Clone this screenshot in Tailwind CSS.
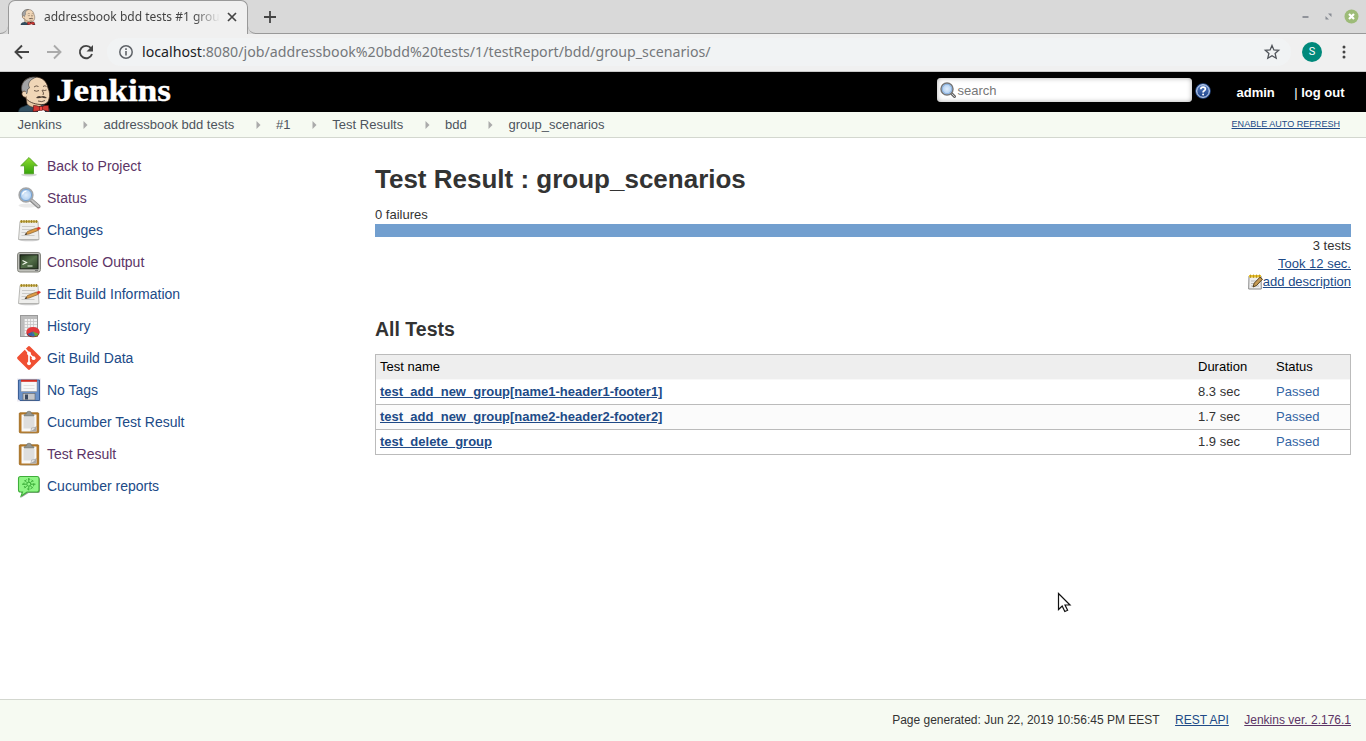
<!DOCTYPE html>
<html lang="en">
<head>
<meta charset="utf-8">
<title>Test Result : group_scenarios</title>
<script src="https://cdn.jsdelivr.net/npm/@tailwindcss/browser@4"></script>
</head>
<body class="relative flex h-[741px] w-[1366px] flex-col overflow-hidden bg-white font-['Liberation_Sans',sans-serif] text-[13px] text-[#333]">
<svg class="absolute size-0">
  <defs>
    <linearGradient id="gr" x2="0" y2="1"><stop stop-color="#8fdd30"/><stop offset="1" stop-color="#36a40c"/></linearGradient>
    <linearGradient id="scr" x2="1" y2="1"><stop stop-color="#24351e"/><stop offset=".5" stop-color="#54704a"/><stop offset="1" stop-color="#2a3d24"/></linearGradient>
    <linearGradient id="help" x2="0" y2="1"><stop stop-color="#5f86c8"/><stop offset="1" stop-color="#173c83"/></linearGradient>
    <radialGradient id="lens"><stop stop-color="#e0edfb"/><stop offset="1" stop-color="#a4c8ef"/></radialGradient>
  </defs>
  <symbol id="butler" viewBox="0 0 33 36">
    <path d="M.5 36c0-3 2-5 5-5.500l6-2.500h12l6 3c2 1 2.500 3 2.500 5z" fill="#335061" stroke="#16242e" stroke-width=".7"/>
    <path d="M8 21l1 7q5 5 13 3l2-3z" fill="#e6c9a6" stroke="#4a3628" stroke-width=".6"/>
    <path d="M7 21C4 17 3 13 4 9 6 3 11 1 17 1c8 0 12 5 13 11 2 4 2 8 1 11-1 4-4 6-9 5.500C16 28 10 26 7 21z" fill="#f0d6b7" stroke="#3a2a20" stroke-width=".8"/>
    <path d="M5.500 18C2.500 14 3 8 7 4.500 10 2 14 .8 18 1.200 13.500 3 11 5 10.500 9l1 3-2 1.500-.5 4z" fill="#a2a3a5" stroke="#333" stroke-width=".6"/>
    <path d="M7.500 15.500c-2.500-1-4 1-3.500 3s2.500 3.500 5 2.500" fill="#f0d6b7" stroke="#4a3020" stroke-width=".8"/>
    <path d="M16 11q2-2 4.500-.5M25 10.500q2-1.500 3.500 0M16 14.500q2.500 1.500 5 0M24.500 14q2 1 4 0M24 14q2.500 3.500 1 5M20 25q4 1.500 7-.5" fill="none" stroke="#4a382c" stroke-width=".8"/>
    <path d="M18 22q2-3 5-1.500 3-1.500 6 1.500-3 .5-5-.5-3 1-6 .5z" fill="#4a3d34"/>
    <path d="M20 31h6l1 5h-7z" fill="#fff"/>
    <path d="M15.500 29.500q3-.5 7 2 4.500-3 8-2l.5 6q-4-.5-7.500-2.500-4 3-8.500 2.500z" fill="#d33833" stroke="#4a0d0d" stroke-width=".6"/>
    <rect x="21.500" y="30.500" width="3" height="4" fill="#ef4a44" stroke="#4a0d0d" stroke-width=".5"/>
  </symbol>
  <symbol id="up" viewBox="0 0 24 24">
    <ellipse cx="12" cy="20.800" rx="8" ry="1.600" fill="#d8d8d8"/>
    <path d="M12 3.500l8.300 8.300h-3.800v8H7.500v-8H3.700z" fill="url(#gr)" stroke="#4a9a1c" stroke-width=".8"/>
  </symbol>
  <symbol id="lensicon" viewBox="0 0 24 24">
    <ellipse cx="11" cy="19.500" rx="9.500" ry="2" fill="#eaeaea"/>
    <path d="M14 14l7.500 6.500" stroke="#8b8b8b" stroke-width="4" stroke-linecap="round"/>
    <path d="M14.500 14l7 6.200" stroke="#c4c4c4" stroke-width="2" stroke-linecap="round"/>
    <circle cx="9" cy="9" r="6.800" fill="url(#lens)" stroke="#a4a6a8" stroke-width="1.700"/>
    <circle cx="9" cy="9" r="5.600" fill="none" stroke="#729fcf" stroke-width=".9"/>
    <path d="M5.500 8.500q.5-3 4-3.500" stroke="#fff" stroke-width="1.200" fill="none"/>
  </symbol>
  <symbol id="notepad" viewBox="0 0 24 24">
    <ellipse cx="12" cy="22" rx="10" ry="1.300" fill="#ccc"/>
    <path d="M3 3.500h18l1 18H1.500z" fill="#eeeeec" stroke="#a8a8a4" stroke-width=".8"/>
    <path d="M3 2.500h17.500v2H3z" fill="#c2a63a"/>
    <path d="M4.500 2v3M7 2v3M9.500 2v3M12 2v3M14.500 2v3M17 2v3M19.500 2v3" stroke="#8f7620" stroke-width=".8"/>
    <path d="M5 8.500h13M5 11.500h11M4.500 14.500h7M4.500 17.500h13" stroke="#cbcbc8"/>
    <path d="M8.500 16.500l2-3 9-3.500 1.500 2.500-9 3.500z" fill="#dc9b45" stroke="#86602c" stroke-width=".7"/>
    <path d="M19.500 10l2-.9q2-.2 2.300 1.500L21 12.500z" fill="#dd3a2c"/>
    <path d="M7.500 17l1.600-2 1 1.200z" fill="#222"/>
  </symbol>
  <symbol id="console" viewBox="0 0 24 24">
    <rect x=".5" y="2.500" width="23" height="19.500" rx="2.500" fill="#bfc0ba" stroke="#85867f"/>
    <rect x="3" y="4.800" width="18" height="14" fill="url(#scr)" stroke="#171d14"/>
    <path d="M5.500 10.500l4 2-4 2M10.500 16h5" fill="none" stroke="#eef5e8" stroke-width="1.200"/>
    <path d="M18 20.500h3" stroke="#777"/>
  </symbol>
  <symbol id="history" viewBox="0 0 24 24">
    <rect x="3.500" y="1.500" width="17" height="21" fill="#f2f2f2" stroke="#999"/>
    <path d="M4 2h16v3H4zM4 2h3v20H4z" fill="#bcbcbc"/>
    <path d="M7.500 5v17M10.500 5v17M13.500 5v17M16.500 5v17M7 7.500h13M7 10.500h13M7 13.500h13M7 16.500h13M7 19.500h13" stroke="#c5c5c5" stroke-width=".8"/>
    <ellipse cx="16" cy="18.800" rx="6.500" ry="4.500" fill="#a50e0e"/>
    <ellipse cx="16" cy="17.500" rx="6.500" ry="4.500" fill="#e4393b"/>
    <path d="M16 17.500l-1.500 5q-2.500-.3-4-2.500z" fill="#3465a4"/><path d="M16 17.500l6 2.500q-2 3-7.500 2.500z" fill="#6aa535"/><path d="M16 17.500l-1.500 5 3.500-.3z" fill="#3a63b8"/>
  </symbol>
  <symbol id="git" viewBox="0 0 24 24">
    <path d="M10.800.7q1.200-1.200 2.400 0l10.100 10.100q1.200 1.200 0 2.400L13.200 23.300q-1.200 1.200-2.400 0L.7 13.200q-1.200-1.200 0-2.400z" fill="#f05033"/>
    <path d="M8 2.800l4 4.500v10M12 7.500l4.500 4.500" stroke="#fff" stroke-width="1.700" fill="none"/>
    <circle cx="12" cy="7.500" r="1.900" fill="#fff"/><circle cx="12" cy="17.300" r="1.900" fill="#fff"/><circle cx="16.600" cy="12.200" r="1.900" fill="#fff"/>
  </symbol>
  <symbol id="floppy" viewBox="0 0 24 24">
    <rect y=".5" width="24" height="23" fill="#eceaf2"/>
    <path d="M1.500 2h21v20.500H3L1.500 21z" fill="#6a91c8" stroke="#3a5f96"/>
    <rect x="4" y="2" width="16" height="11.500" fill="#f7f7f7" stroke="#888" stroke-width=".5"/>
    <path d="M4 1.800h16v2H4z" fill="#d22a20"/>
    <path d="M6.500 7.500h11M6.500 10.500h11" stroke="#e0e0e0"/>
    <rect x="6" y="15.500" width="12" height="6.500" fill="#c4c6ca" stroke="#666" stroke-width=".6"/>
    <rect x="8" y="16.500" width="3" height="5" fill="#394860"/>
  </symbol>
  <symbol id="clip" viewBox="0 0 24 24">
    <ellipse cx="12" cy="23.300" rx="9" ry=".7" fill="#ddd"/>
    <rect x="2.300" y="2.800" width="19.400" height="20" rx=".8" fill="#b87a28" stroke="#9b6417" stroke-width=".8"/>
    <path d="M4.500 4.500h15v17h-15z" fill="#f8f8f8"/>
    <path d="M6.500 7h11v11.500h-11z" fill="#dedede"/>
    <path d="M13.500 21.500q1.500-1 1-3.500 2 .5 5-1.500v5z" fill="#a9a9a9"/>
    <path d="M14.500 18q-.2 2-1 3.500 3.500-1 6-5-2.500 1.800-5 1.500z" fill="#e9e9e9" stroke="#888" stroke-width=".4"/>
    <path d="M7 6q0-2 2.500-2.300Q9.500 1.200 12 1.200t2.500 2.500Q17 4 17 6z" fill="#949691" stroke="#73756f" stroke-width=".7"/>
  </symbol>
  <symbol id="cuke" viewBox="0 0 24 24">
    <path d="M3.500 4h18.500q1 0 1 2v11q0 2-2 2H11.500l-7.500 4.700 2-4.700H4z" fill="#555" opacity=".6"/>
    <path d="M3.500 2.500h16.500q2 0 2 2v11.500q0 2-2 2H10L4 22.300l1.500-4.300h-2q-2 0-2-2V4.500q0-2 2-2z" fill="#8ff585" stroke="#3fae3a" stroke-width="1.100"/>
    <g fill="none" stroke="#3aab38" stroke-width="1"><circle cx="11.800" cy="10.200" r="2"/><circle cx="11.800" cy="10.200" r="5" stroke-dasharray="2.200 1.500"/><path d="M11.800 4v4M11.800 12.500v4M5 10.200h4.500M14 10.200h4.500M7.500 6.200l2.500 2.500M13.300 11.700l2.500 2.500M16 6.200l-2.500 2.500M10 11.700l-2.500 2.500"/></g>
  </symbol>
  <symbol id="crumb" viewBox="0 0 5 8"><path d="M.5 0L4.500 4 .5 8z" fill="#aaa"/></symbol>
</svg>

<!-- Window title bar with tab -->
<div class="flex h-[34px] shrink-0 bg-[#d9d9d9]">
  <div class="w-2 rounded-br-lg border-b border-[#999]"></div>
  <div class="flex h-[34px] w-[240px] items-center rounded-t-[7px] border border-b-0 border-[#999] bg-[#f0f0f0] pb-px pl-[11px]">
    <svg class="size-4 shrink-0"><use href="#butler"/></svg>
    <div class="ml-2 w-[176px] whitespace-nowrap mask-r-from-85% font-['Noto_Sans',sans-serif] text-xs text-[#444]">addressbook bdd tests #1 grou</div>
    <svg class="ml-[7px] size-[10px] shrink-0" viewBox="0 0 10 10"><path d="M1 1l8 8M9 1L1 9" stroke="#444" stroke-width="1.700"/></svg>
  </div>
  <div class="flex flex-1 items-center rounded-bl-lg border-b border-[#999] pr-[7px]">
    <svg class="ml-4 size-3" viewBox="0 0 12 12"><path d="M6 0v12M0 6h12" stroke="#444" stroke-width="1.800"/></svg>
    <svg class="ml-auto h-[6px] w-[7px]" viewBox="0 0 7 6"><path d="M.5 3h6" stroke="#888c94" stroke-width="1.800"/></svg>
    <svg class="ml-4 size-[7px]" viewBox="0 0 7 7"><path d="M3 .5h3.500v3.500zM.5 3v3.500H4z" fill="#888c94"/></svg>
    <svg class="ml-3 size-[15px]" viewBox="0 0 15 15"><circle cx="7.500" cy="7.500" r="7" fill="#9dbb78"/><path d="M5 5l5 5M10 5l-5 5" stroke="#fff" stroke-width="2.200"/></svg>
  </div>
</div>

<!-- Browser toolbar -->
<div class="flex h-[38px] shrink-0 items-center border-b border-[#c8c8c8] bg-[#f0f0f0] pb-[2px] pl-[14px]">
  <svg class="size-4" viewBox="0 0 16 16"><path d="M15 8H2M8 1.500L1.500 8 8 14.500" fill="none" stroke="#444" stroke-width="1.900"/></svg>
  <svg class="ml-4 size-4" viewBox="0 0 16 16"><path d="M1 8h13M8 1.500L14.500 8 8 14.500" fill="none" stroke="#aaa" stroke-width="1.900"/></svg>
  <svg class="ml-4 size-4" viewBox="0 0 16 16"><path d="M13 4.200A6.200 6.200 0 1 0 14 10" fill="none" stroke="#444" stroke-width="1.900"/><path d="M15 1v6.500H8.500z" fill="#444"/></svg>
  <div class="ml-[13px] flex h-7 w-[1184px] items-center rounded-full bg-[#f1f3f4] pr-3 pl-3">
    <svg class="size-[14px]" viewBox="0 0 14 14"><circle cx="7" cy="7" r="6.200" fill="none" stroke="#5f6368" stroke-width="1.500"/><path d="M7 6v4.500M7 3.300v1.600" stroke="#5f6368" stroke-width="1.600"/></svg>
    <div class="ml-[9px] whitespace-nowrap font-['Noto_Sans',sans-serif] text-[14.2px] leading-5 text-[#75787b]"><span class="text-[#202124]">localhost</span>:8080/job/addressbook%20bdd%20tests/1/testReport/bdd/group_scenarios/</div>
    <svg class="ml-auto size-[14px] overflow-visible" viewBox="0 0 14 14"><path d="M7 .5l1.900 4.400 4.800.4-3.600 3.200 1.100 4.700L7 10.700l-4.200 2.500 1.100-4.700L.3 5.300l4.800-.4z" fill="none" stroke="#50545a" stroke-width="1.300"/></svg>
  </div>
  <div class="ml-[11px] flex size-5 items-center justify-center rounded-full bg-[#00897b] pt-px font-[Roboto,sans-serif] text-[11px] text-white">S</div>
  <svg class="ml-5 h-[14px] w-1" viewBox="0 0 4 14"><g fill="#444"><circle cx="2" cy="2" r="1.500"/><circle cx="2" cy="7" r="1.500"/><circle cx="2" cy="12" r="1.500"/></g></svg>
</div>

<!-- Jenkins header -->
<header class="flex h-10 shrink-0 items-center bg-black text-white">
  <svg class="ml-[18px] h-10 w-[160px]" viewBox="0 0 160 40">
    <svg x="0" y="4" width="33" height="36"><use href="#butler"/></svg>
    <text x="38" y="29" font-family="Liberation Serif, serif" font-weight="700" font-size="31.5" fill="#fff" stroke="#fff" stroke-width=".4" textLength="115" lengthAdjust="spacingAndGlyphs">Jenkins</text>
  </svg>
  <div class="mb-1 ml-[759px] flex h-6 w-[255px] items-center rounded-[4px] bg-white pl-[3px] text-[#777] shadow-[inset_0_0_5px_#aaa]">
    <svg class="size-4" viewBox="0 0 16 16"><path d="M10.500 10.500l4 4" stroke="#666" stroke-width="3" stroke-linecap="round"/><path d="M10.500 10.500l4 4" stroke="#ccc" stroke-linecap="round"/><circle cx="7" cy="7" r="6" fill="url(#lens)" stroke="#777" stroke-width="1.500"/><circle cx="7" cy="7" r="4.700" fill="none" stroke="#82abdc" stroke-width=".8"/></svg>
    <span class="mt-px ml-[1.500px]">search</span>
  </div>
  <svg class="mb-0.5 ml-[3px] size-4" viewBox="0 0 16 16"><circle cx="8" cy="8" r="7" fill="url(#help)" stroke="#2e5496" stroke-width="1.500"/><circle cx="8" cy="8" r="6.300" fill="none" stroke="#dbe6f8"/><path d="M5.800 6.300q0-2.200 2.300-2.200t2.300 2q0 1-1.200 1.700T8.100 9.500" fill="none" stroke="#fff" stroke-width="1.700"/><circle cx="8.100" cy="11.600" r="1" fill="#fff"/></svg>
  <b class="mt-[2px] ml-[25.500px]">admin</b>
  <span class="mt-[2px] ml-[19.500px]">|</span><b class="mt-[2px] ml-[3.500px]">log out</b>
</header>

<!-- Breadcrumbs -->
<nav class="flex h-[26px] shrink-0 items-center border-b border-[#d3d7cf] bg-[#f6faf2] pr-[26px] pl-[17.600px] whitespace-nowrap text-[#4d545d]">
  <span>Jenkins</span><svg class="mr-[15px] ml-[21.800px] h-2 w-[5px]"><use href="#crumb"/></svg>
  <span>addressbook bdd tests</span><svg class="mr-[15px] ml-[21.800px] h-2 w-[5px]"><use href="#crumb"/></svg>
  <span>#1</span><svg class="mr-[15px] ml-[21.800px] h-2 w-[5px]"><use href="#crumb"/></svg>
  <span>Test Results</span><svg class="mr-[15px] ml-[21.800px] h-2 w-[5px]"><use href="#crumb"/></svg>
  <span>bdd</span><svg class="mr-[15px] ml-[21.800px] h-2 w-[5px]"><use href="#crumb"/></svg>
  <span>group_scenarios</span>
  <a class="mt-px ml-auto text-[9.050px] text-[#204a87] underline">ENABLE AUTO REFRESH</a>
</nav>

<div class="flex min-h-0 flex-1">
  <aside class="flex w-[375px] shrink-0 flex-col pt-3 pl-[17px] text-sm text-[#204a87] *:flex *:h-8 *:items-center *:gap-1.5 [&_svg]:size-6">
    <a class="text-[#5c3566]"><svg><use href="#up"/></svg>Back to Project</a>
    <a class="text-[#5c3566]"><svg><use href="#lensicon"/></svg>Status</a>
    <a><svg><use href="#notepad"/></svg>Changes</a>
    <a class="text-[#5c3566]"><svg><use href="#console"/></svg>Console Output</a>
    <a><svg><use href="#notepad"/></svg>Edit Build Information</a>
    <a><svg><use href="#history"/></svg>History</a>
    <a><svg><use href="#git"/></svg>Git Build Data</a>
    <a><svg><use href="#floppy"/></svg>No Tags</a>
    <a><svg><use href="#clip"/></svg>Cucumber Test Result</a>
    <a class="text-[#5c3566]"><svg><use href="#clip"/></svg>Test Result</a>
    <a><svg><use href="#cuke"/></svg>Cucumber reports</a>
  </aside>

  <main class="w-[976px] pt-[25px]">
    <h1 class="text-[26px] leading-8 font-bold">Test Result : group_scenarios</h1>
    <div class="mt-[11px] h-[18px] leading-[18px]">0 failures</div>
    <div class="h-[13px] bg-[#729fcf]"></div>
    <div class="flex flex-col items-end leading-[18px]">
      <span>3 tests</span>
      <a class="text-[#204a87] underline">Took 12 sec.</a>
      <a class="flex items-center text-[#204a87] underline">
        <svg class="h-4 w-[15px]" viewBox="0 0 15 16"><path d="M1 2h12l.3 13H.7z" fill="#eee" stroke="#888"/><path d="M1 1h12v2.500H1z" fill="#e7bf2f"/><path d="M2.500 .5v3.500M5.500 .5v3.500M8.500 .5v3.500M11.500 .5v3.500" stroke="#ab8612" stroke-width=".7"/><path d="M3 7h7M3 9.500h4M3 12h8" stroke="#bbb"/><path d="M5 13l1.200-3.800L12 3.200l2.500 2L8.500 11.500z" fill="#c69b55" stroke="#4c3510" stroke-width=".9"/></svg>add description</a>
    </div>
    <h2 class="mt-[26px] text-[19.500px] leading-6 font-bold">All Tests</h2>
    <div class="mt-[13px] border border-[#bbb] *:grid *:h-[25px] *:grid-cols-[818px_78px_1fr] *:items-center *:pl-1">
      <div class="border-b border-[#f8f8f8] bg-[#eee] text-black"><span>Test name</span><span>Duration</span><span>Status</span></div>
      <div class="border-b border-[#bbb]"><b class="text-[#204a87] underline">test_add_new_group[name1-header1-footer1]</b><span>8.3 sec</span><span class="text-[#3465a4]">Passed</span></div>
      <div class="border-b border-[#bbb] bg-[#fbfbfb]"><b class="text-[#204a87] underline">test_add_new_group[name2-header2-footer2]</b><span>1.7 sec</span><span class="text-[#3465a4]">Passed</span></div>
      <div class="!h-6"><b class="text-[#204a87] underline">test_delete_group</b><span>1.9 sec</span><span class="text-[#3465a4]">Passed</span></div>
    </div>
  </main>
</div>

<footer class="flex h-[42px] shrink-0 items-center justify-end gap-[15.400px] border-t border-[#d3d7cf] bg-[#f6faf2] pr-[15px] pb-[2px] text-xs whitespace-nowrap">
  <span>Page generated: Jun 22, 2019 10:56:45 PM EEST</span>
  <a class="text-[#204a87] underline">REST API</a>
  <a class="text-[#5c3566] underline">Jenkins ver. 2.176.1</a>
</footer>

<!-- Mouse pointer -->
<svg class="absolute top-[592px] left-[1057px] h-[22px] w-[15px]" viewBox="0 0 15 22"><path d="M1.500 1.500v16l3.700-3.500 2.600 5.500 2.800-1.200L8 13h5z" fill="#fff" stroke="#111" stroke-width="1.200"/></svg>
</body>
</html>
